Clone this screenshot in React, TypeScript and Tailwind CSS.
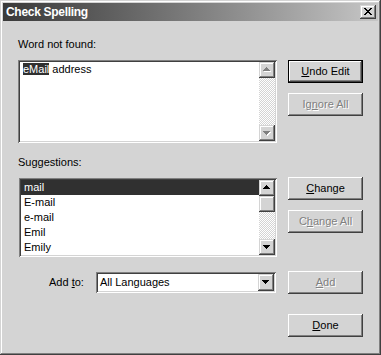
import React from "react";

const RAISED =
  "shadow-[inset_-1px_-1px_#404040,inset_1px_1px_#ffffff,inset_-2px_-2px_#808080,inset_2px_2px_#d4d4d4]";
const SCROLLBTN =
  "shadow-[inset_-1px_-1px_#404040,inset_1px_1px_#d4d4d4,inset_-2px_-2px_#808080,inset_2px_2px_#ffffff]";
const SUNKEN =
  "shadow-[inset_1px_1px_#808080,inset_-1px_-1px_#ffffff,inset_2px_2px_#404040,inset_-2px_-2px_#d4d4d4]";
const TRACK =
  "bg-[repeating-conic-gradient(#ffffff_0_25%,#d4d4d4_0_50%)] bg-[length:2px_2px]";

function Arrow({ dir, disabled }: { dir: "up" | "down"; disabled?: boolean }) {
  const rows = dir === "up" ? [[3, 1], [2, 3], [1, 5], [0, 7]] : [[0, 7], [1, 5], [2, 3], [3, 1]];
  return (
    <svg width="8" height="5" viewBox="0 0 8 5" shapeRendering="crispEdges">
      {disabled &&
        rows.map(([x, w], i) => (
          <rect key={"s" + i} x={x + 1} y={i + 1} width={w} height={1} fill="#ffffff" />
        ))}
      {rows.map(([x, w], i) => (
        <rect key={i} x={x} y={i} width={w} height={1} fill={disabled ? "#808080" : "#000000"} />
      ))}
    </svg>
  );
}

function ScrollBtn({ dir, disabled }: { dir: "up" | "down"; disabled?: boolean }) {
  return (
    <div className={`w-4 h-4 bg-[#d4d4d4] ${SCROLLBTN} flex items-center justify-center shrink-0`}>
      <div className={dir === "up" ? "mt-[-1px]" : "mt-[1px]"}>
        <Arrow dir={dir} disabled={disabled} />
      </div>
    </div>
  );
}

function Btn({
  children,
  disabled,
  isDefault,
}: {
  children: React.ReactNode;
  disabled?: boolean;
  isDefault?: boolean;
}) {
  const base = "w-[75px] h-[23px] bg-[#d4d4d4] flex items-center justify-center text-[11px] leading-[13px]";
  if (isDefault) {
    return (
      <div
        className={`${base} border border-black shadow-[inset_-1px_-1px_#404040,inset_1px_1px_#ffffff,inset_-2px_-2px_#808080] text-black`}
      >
        {children}
      </div>
    );
  }
  return (
    <div
      className={`${base} ${RAISED} ${
        disabled ? "text-[#808080] [text-shadow:1px_1px_0_#ffffff]" : "text-black"
      }`}
    >
      {children}
    </div>
  );
}

function U({ children }: { children: React.ReactNode }) {
  return <span className="underline underline-offset-[1px]">{children}</span>;
}

export default function App() {
  const suggestions = ["mail", "E-mail", "e-mail", "Emil", "Emily"];
  return (
    <div className="w-[381px] h-[355px] bg-[#d4d4d4] p-[3px] font-['Liberation_Sans',Arial,sans-serif] text-[11px] leading-[13px] text-black shadow-[inset_-1px_-1px_#404040,inset_1px_1px_#d4d4d4,inset_-2px_-2px_#808080,inset_2px_2px_#ffffff] overflow-hidden">
      {/* Title bar */}
      <div className="h-[18px] flex items-center justify-between bg-gradient-to-r from-[#3a3a3a] to-[#c6c6c6] pl-[3px] pr-[2px]">
        <span className="text-white font-bold text-[12px] tracking-[-0.3px] leading-[14px]">Check Spelling</span>
        <div className={`w-4 h-[14px] bg-[#d4d4d4] ${SCROLLBTN} flex items-center justify-center`}>
          <svg width="8" height="7" viewBox="0 0 8 7" shapeRendering="crispEdges" className="mt-[-1px]">
            {[
              [0, 6],
              [1, 5],
              [2, 4],
              [3, 3],
              [2, 4],
              [1, 5],
              [0, 6],
            ].map(([a, b], i) => (
              <g key={i}>
                <rect x={a} y={i} width={2} height={1} fill="#000" />
                <rect x={b} y={i} width={2} height={1} fill="#000" />
              </g>
            ))}
          </svg>
        </div>
      </div>

      {/* Body */}
      <div className="pl-[15px] flex flex-col">
        {/* Section 1 */}
        <div className="mt-[17px] flex gap-[11px]">
          <div className="w-[259px] flex flex-col">
            <div className="h-[13px]">Word not found:</div>
            <div className={`mt-[9px] h-[83px] bg-white ${SUNKEN} p-[2px] flex`}>
              <div className="flex-1 pl-[3px] pt-[1px]">
                <span className="bg-[#303030] text-white">eMail</span> address
              </div>
              <div className="w-4 flex flex-col">
                <ScrollBtn dir="up" disabled />
                <div className={`flex-1 ${TRACK}`} />
                <ScrollBtn dir="down" disabled />
              </div>
            </div>
          </div>
          <div className="pt-[22px] flex flex-col gap-[10px]">
            <Btn isDefault>
              <U>U</U>ndo Edit
            </Btn>
            <Btn disabled>
              Ig<U>n</U>ore All
            </Btn>
          </div>
        </div>

        {/* Section 2 */}
        <div className="mt-[13px] flex gap-[11px]">
          <div className="w-[259px] flex flex-col">
            <div className="h-[13px]">Suggestions:</div>
            <div className={`mt-[9px] ml-px h-[79px] bg-white ${SUNKEN} p-[2px] flex`}>
              <div className="flex-1 flex flex-col">
                {suggestions.map((s, i) => (
                  <div
                    key={s}
                    className={`h-[15px] leading-[15px] pl-[3px] ${i === 0 ? "bg-[#303030] text-white" : ""}`}
                  >
                    {s}
                  </div>
                ))}
              </div>
              <div className="w-4 flex flex-col">
                <ScrollBtn dir="up" />
                <div className={`w-4 h-4 bg-[#d4d4d4] ${SCROLLBTN}`} />
                <div className={`flex-1 ${TRACK}`} />
                <ScrollBtn dir="down" />
              </div>
            </div>
          </div>
          <div className="pt-[21px] flex flex-col gap-[10px]">
            <Btn>
              <U>C</U>hange
            </Btn>
            <Btn disabled>
              C<U>h</U>ange All
            </Btn>
          </div>
        </div>

        {/* Section 3 */}
        <div className="mt-[14px] flex items-center gap-[11px]">
          <div className="w-[259px] flex items-center pl-[31px] gap-[12px]">
            <span>
              Add <U>t</U>o:
            </span>
            <div className={`w-[180px] h-[21px] bg-white ${SUNKEN} p-[2px] flex items-center`}>
              <div className="flex-1 pl-[2px]">All Languages</div>
              <div className="h-[17px] w-4 flex">
                <div className={`w-4 h-[17px] bg-[#d4d4d4] ${SCROLLBTN} flex items-center justify-center`}>
                  <Arrow dir="down" />
                </div>
              </div>
            </div>
          </div>
          <Btn disabled>
            <U>A</U>dd
          </Btn>
        </div>

        {/* Section 4 */}
        <div className="mt-[20px] flex gap-[11px]">
          <div className="w-[259px]" />
          <Btn>
            <U>D</U>one
          </Btn>
        </div>
      </div>
    </div>
  );
}
